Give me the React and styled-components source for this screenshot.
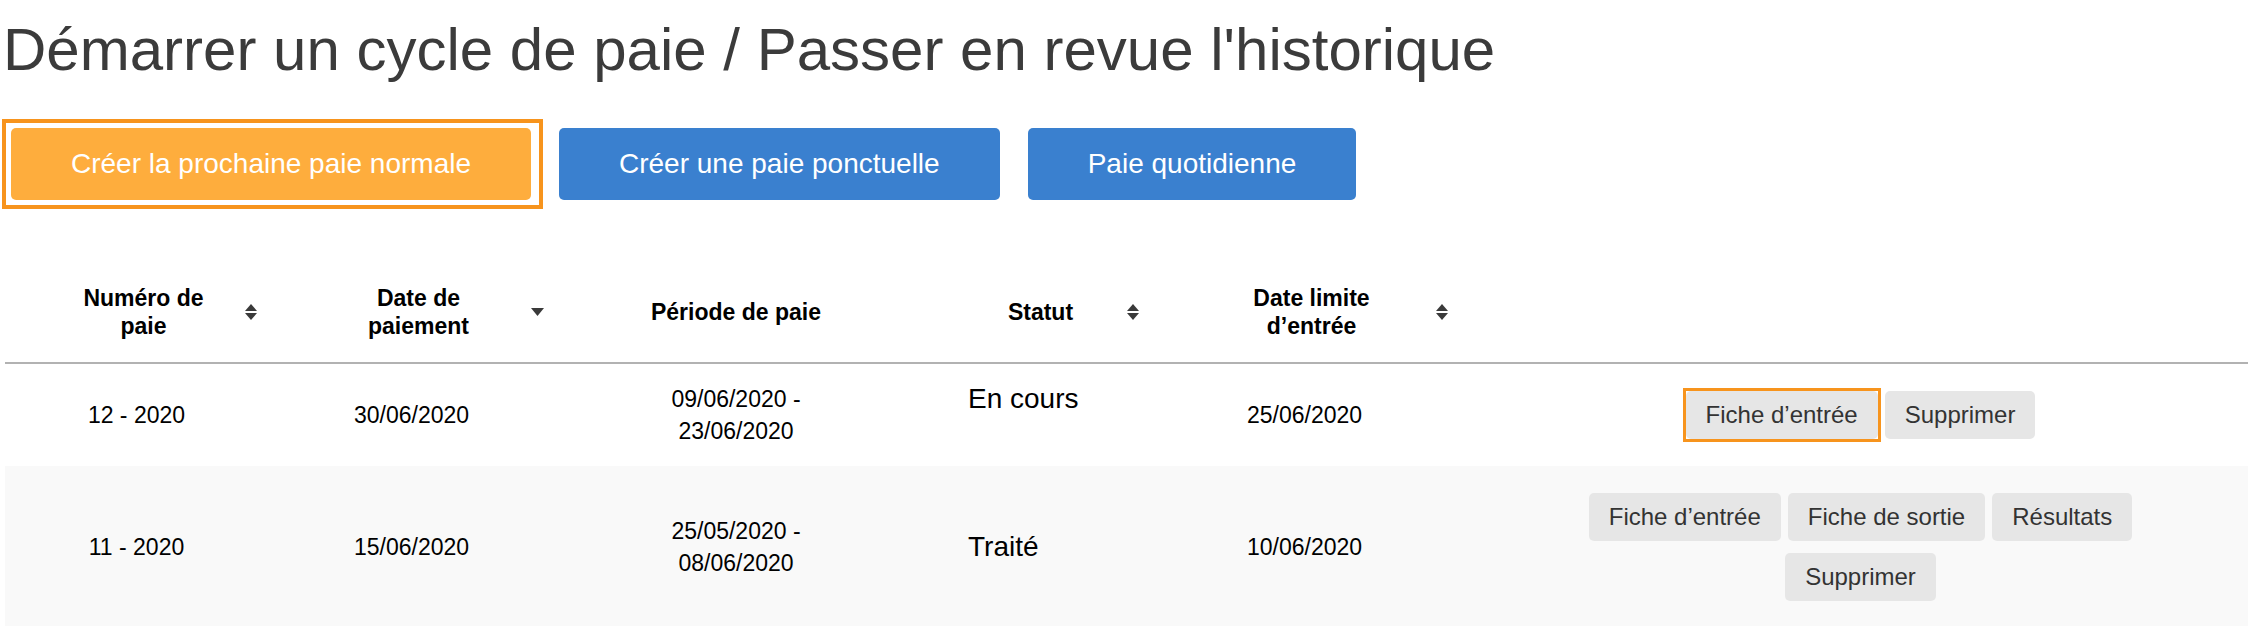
import React from 'react'
import styled, { createGlobalStyle, css } from 'styled-components'

const GlobalStyle = createGlobalStyle`
  html, body {
    margin: 0;
    padding: 0;
    background: #fff;
  }
  body {
    font-family: "Liberation Sans", Arial, Helvetica, sans-serif;
  }
  * {
    box-sizing: border-box;
  }
`

const columns = '263px 287px 362px 233px 309px 1fr'

const rows = [
  {
    num: '12 - 2020',
    payDate: '30/06/2020',
    period: ['09/06/2020 -', '23/06/2020'],
    status: 'En cours',
    raised: true,
    deadline: '25/06/2020',
    actions: ['Fiche d’entrée', 'Supprimer'],
    focused: 0,
  },
  {
    num: '11 - 2020',
    payDate: '15/06/2020',
    period: ['25/05/2020 -', '08/06/2020'],
    status: 'Traité',
    deadline: '10/06/2020',
    actions: ['Fiche d’entrée', 'Fiche de sortie', 'Résultats', 'Supprimer'],
    striped: true,
  },
]

const SortBoth = () => (
  <SortIcon width="12" height="16" viewBox="0 0 12 16">
    <path d="M6 0 L12 7 H0 Z" />
    <path d="M0 9 H12 L6 16 Z" />
  </SortIcon>
)

const SortDown = () => (
  <SortIcon width="13" height="8" viewBox="0 0 13 8">
    <path d="M0 0 H13 L6.5 8 Z" />
  </SortIcon>
)

// square focus ring, drawn apart from the rounded button
const focusRing = (size, before, after = before) => css`
  &::after {
    content: '';
    position: absolute;
    top: -${before}px;
    bottom: -${before}px;
    left: -${before}px;
    right: -${after}px;
    border: ${size}px solid #f7941d;
    pointer-events: none;
  }
`

const App = () => {
  return (
    <Page>
      <GlobalStyle />
      <Title>Démarrer un cycle de paie / Passer en revue l'historique</Title>
      <Toolbar>
        <MainButton $variant="primary" $focused>Créer la prochaine paie normale</MainButton>
        <MainButton>Créer une paie ponctuelle</MainButton>
        <MainButton>Paie quotidienne</MainButton>
      </Toolbar>

      <Table>
        <HeaderRow>
          <HeaderCell $sortable>
            <span>Numéro de<br />paie</span>
            <SortBoth />
          </HeaderCell>
          <HeaderCell $sortable>
            <span>Date de<br />paiement</span>
            <SortDown />
          </HeaderCell>
          <HeaderCell>
            <span>Période de paie</span>
          </HeaderCell>
          <HeaderCell $sortable>
            <span>Statut</span>
            <SortBoth />
          </HeaderCell>
          <HeaderCell $sortable>
            <span>Date limite<br />d’entrée</span>
            <SortBoth />
          </HeaderCell>
          <HeaderCell />
        </HeaderRow>

        {rows.map((row) => (
          <BodyRow key={row.num} $striped={row.striped}>
            <Cell>{row.num}</Cell>
            <Cell>{row.payDate}</Cell>
            <Cell>
              {row.period[0]}
              <br />
              {row.period[1]}
            </Cell>
            <StatusCell $raised={row.raised}>{row.status}</StatusCell>
            <Cell>{row.deadline}</Cell>
            <ActionCell>
              <ActionGroup>
                {row.actions.map((label, i) => (
                  <RowButton key={label} $focused={row.focused === i}>
                    {label}
                  </RowButton>
                ))}
              </ActionGroup>
            </ActionCell>
          </BodyRow>
        ))}
      </Table>
    </Page>
  )
}

export default App

const Page = styled.div`
  width: 2248px;
  height: 626px;
  overflow: hidden;
  background: #fff;
`

const Title = styled.h1`
  margin: 0;
  padding: 15px 0 0 3px;
  font-size: 60px;
  font-weight: 400;
  line-height: 69px;
  color: #3b3b3b;
`

const Toolbar = styled.div`
  display: flex;
  gap: 28px;
  padding: 44px 0 0 11px;
`

const MainButton = styled.button`
  position: relative;
  height: 72px;
  padding: 0 60px;
  border: none;
  border-radius: 5px;
  background: ${(p) => (p.$variant === 'primary' ? '#fead3d' : '#3a80cf')};
  color: #fff;
  font-family: inherit;
  font-size: 28px;
  outline: none;
  cursor: pointer;
  ${(p) => p.$focused && focusRing(4, 9, 12)}
`

const Table = styled.div`
  margin: 62px 0 0 5px;
`

const HeaderRow = styled.div`
  display: grid;
  grid-template-columns: ${columns};
  height: 102px;
  border-bottom: 2px solid #b2b2b2;
`

const HeaderCell = styled.div`
  position: relative;
  display: flex;
  align-items: center;
  justify-content: center;
  padding-left: ${(p) => (p.$sortable ? '14px' : '0')};
  text-align: center;
  font-size: 23px;
  font-weight: 700;
  line-height: 28px;
  color: #000;
`

const SortIcon = styled.svg`
  position: absolute;
  right: 11px;
  top: 50%;
  transform: translateY(-50%);
  fill: #3a3a3a;
`

const BodyRow = styled.div`
  display: grid;
  grid-template-columns: ${columns};
  align-items: center;
  background: ${(p) => (p.$striped ? '#f9f9f9' : '#fff')};
`

const Cell = styled.div`
  text-align: center;
  font-size: 23px;
  line-height: 32px;
  color: #000;
`

const StatusCell = styled.div`
  padding-left: 51px;
  margin-bottom: ${(p) => (p.$raised ? '32px' : '0')};
  font-size: 28px;
  line-height: 32px;
  color: #000;
`

const ActionCell = styled.div`
  display: flex;
  justify-content: center;
  padding: 27px 0 27px 14px;
`

const ActionGroup = styled.div`
  display: flex;
  flex-wrap: wrap;
  justify-content: center;
  gap: 12px 7px;
  max-width: 600px;
`

const RowButton = styled.button`
  position: relative;
  height: 48px;
  padding: 0 20px;
  border: none;
  border-radius: 5px;
  background: #e6e6e6;
  color: #333;
  font-family: inherit;
  font-size: 24px;
  outline: none;
  cursor: pointer;
  ${(p) => p.$focused && focusRing(3, 3)}
`
